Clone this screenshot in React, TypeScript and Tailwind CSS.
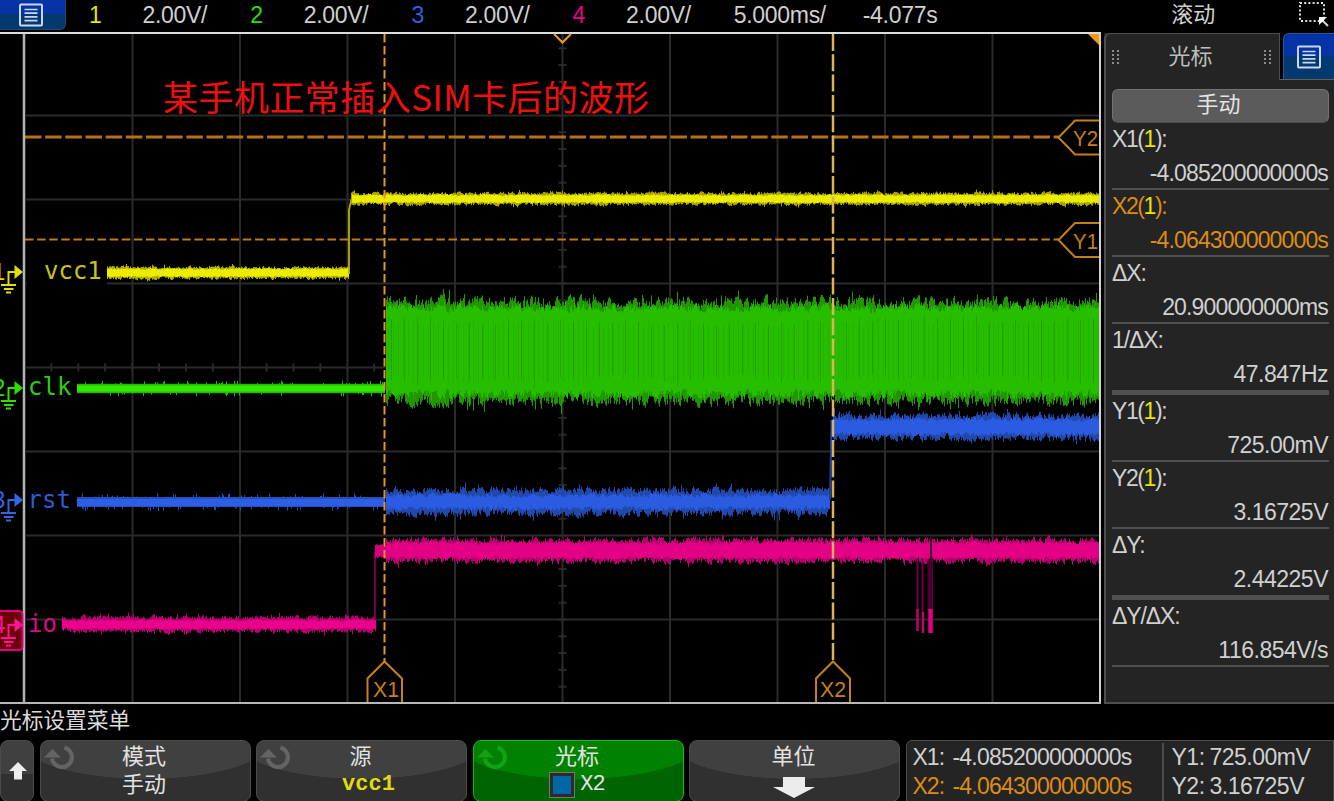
import clsx from "clsx";
import type { ReactNode } from "react";

const SANS = "font-['Liberation_Sans','Noto_Sans_CJK_SC',sans-serif]";

interface Channel {
  id: number;
  scale: string;
  color: string;
}

const channels: Channel[] = [
  { id: 1, scale: "2.00V/", color: "text-[#e6e600]" },
  { id: 2, scale: "2.00V/", color: "text-[#2ee000]" },
  { id: 3, scale: "2.00V/", color: "text-[#2f62e0]" },
  { id: 4, scale: "2.00V/", color: "text-[#e8008c]" },
];

interface Reading {
  label: string;
  source?: number;
  value: string;
  active?: boolean;
  groupEnd?: boolean;
  tight?: boolean;
}

const readings: Reading[] = [
  { label: "X1", source: 1, value: "-4.085200000000s", tight: true },
  { label: "X2", source: 1, value: "-4.064300000000s", active: true, tight: true },
  { label: "ΔX", value: "20.900000000ms", tight: true },
  { label: "1/ΔX", value: "47.847Hz", groupEnd: true },
  { label: "Y1", source: 1, value: "725.00mV" },
  { label: "Y2", source: 1, value: "3.16725V" },
  { label: "ΔY", value: "2.44225V", groupEnd: true },
  { label: "ΔY/ΔX", value: "116.854V/s" },
];

// Deterministic noise so a trace looks the same on every render
function noise(seed: number) {
  let s = seed;
  return () => {
    s = (s * 1664525 + 1013904223) % 4294967296;
    return s / 4294967296;
  };
}

// One vertical stroke per pixel column between a jittered top and bottom,
// each column pulled towards its neighbour so the edge is not pure static
function band(x0: number, x1: number, top: number, bottom: number, jitter: number, seed: number, step = 1) {
  const rnd = noise(seed);
  let d = "";
  let p = 0.5;
  let q = 0.5;
  for (let x = x0; x < x1; x += step) {
    p = p * 0.45 + (rnd() * 1.3 - 0.15) * 0.55;
    q = q * 0.45 + (rnd() * 1.3 - 0.15) * 0.55;
    const a = top + p * jitter - (rnd() > 0.96 ? jitter * 0.4 : 0);
    const b = bottom - q * jitter + (rnd() > 0.96 ? jitter * 0.4 : 0);
    d += `M${x + 0.5} ${a.toFixed(1)}V${b.toFixed(1)}`;
  }
  return d;
}

// Flat trace with an occasional small spike
function spikes(x0: number, x1: number, top: number, bottom: number, size: number, seed: number) {
  const rnd = noise(seed);
  let d = "";
  for (let x = x0; x < x1; x++) {
    const a = top - (rnd() > 0.86 ? rnd() * size : 0);
    const b = bottom + (rnd() > 0.88 ? rnd() * size : 0);
    d += `M${x + 0.5} ${a.toFixed(1)}V${b.toFixed(1)}`;
  }
  return d;
}

function MenuIcon({ className }: { className?: string }) {
  return (
    <svg viewBox="0 0 24 24" className={className} fill="none" stroke="#c9d6f5">
      <rect x="1" y="1.5" width="22" height="21" rx="1" strokeWidth="2" />
      <path d="M5.5 6.5h13M5.5 10.2h13M5.5 13.9h13M5.5 17.6h13" strokeWidth="1.7" />
    </svg>
  );
}

function Grip() {
  return (
    <svg className="h-4 w-2" fill="#8c8c8c">
      {[1, 5, 9, 13].map((y) => (
        <g key={y}>
          <rect x="0" y={y} width="2" height="2" />
          <rect x="5" y={y} width="2" height="2" />
        </g>
      ))}
    </svg>
  );
}

function Knob({ color }: { color: string }) {
  return (
    <svg className="absolute left-[3px] top-1 h-7 w-8" fill="none">
      <path d="M20.5 2.5A10 10 0 1 1 8 13.5" stroke={color} strokeWidth="4.2" />
      <path d="M0 12.5L8.500 4L17 12.500Z" fill={color} />
    </svg>
  );
}

function Ground({ y, n, color }: { y: number; n: number; color: string }) {
  return (
    <g stroke={color} fill={color}>
      <text x="-7.5" y={y + 8} fontSize="23" stroke="none">{n}</text>
      <path d={`M8.5 ${y + 13}V${y}H15`} fill="none" strokeWidth="2" />
      <path d={`M14.5 ${y - 7}L23 ${y}L14.5 ${y + 7}Z`} stroke="none" />
      <path d={`M1 ${y + 13}H16M4 ${y + 17}H13.5M6 ${y + 20.5}H11`} fill="none" strokeWidth="2" />
    </g>
  );
}

function Plot() {
  const cols = Array.from({ length: 9 }, (_, i) => 132.5 + i * 107.5);
  const rows = Array.from({ length: 7 }, (_, i) => 115.5 + i * 84);
  const xTicks = Array.from({ length: 39 }, (_, i) => 24.5 + (i + 1) * 26.9);
  const yTicks = Array.from({ length: 39 }, (_, i) => 31.5 + (i + 1) * 16.8);

  return (
    <svg viewBox="0 31 1102 674" className="block h-[674px] w-[1102px] shrink-0 font-['Liberation_Sans','Noto_Sans_CJK_SC',sans-serif]">
      <g stroke="#2a2a2a" strokeWidth="2">
        {cols.map((x) => <path key={x} d={`M${x} 34V702`} />)}
        {rows.map((y) => <path key={y} d={`M26 ${y}H1099`} />)}
        {xTicks.map((x) => <path key={x} d={`M${x} 363.5V371.5`} />)}
        {yTicks.map((y) => <path key={y} d={`M558.5 ${y}H566.5`} />)}
      </g>

      {/* channel labels sit on the grid with an opaque background */}
      <rect x="27" y="256" width="80" height="29" />
      <g className="font-['DejaVu_Sans_Mono',monospace]" fontSize="24">
        <text x="44" y="279" fill="#c9c31c">vcc1</text>
        <text x="28" y="395" fill="#2bcf10">clk</text>
        <text x="27.5" y="508" fill="#2c5cd4">rst</text>
        <text x="28" y="632" fill="#d80a86">io</text>
      </g>

      {/* vcc1 */}
      <g fill="none">
        <path d={band(107, 349, 265.3, 280.3, 4, 11)} stroke="#b0ac00" />
        <path d={band(107, 349, 268, 277.5, 2, 12)} stroke="#ecec00" />
        <path d="M349 274V210L351.5 199" stroke="#b5ae10" strokeWidth="1.8" />
        <path d={band(351, 1099, 191.2, 206.3, 4, 13)} stroke="#a8a400" />
        <path d={band(352, 1099, 194, 203.5, 2, 14)} stroke="#ecec00" />
      </g>

      {/* clk */}
      <g fill="none">
        <path d={spikes(77, 385, 383.8, 393.2, 3.5, 21)} stroke="#24b800" />
        <path d="M77 388.5H385" stroke="#30ea00" strokeWidth="6" />
        <path d={band(386, 1099, 295, 408, 15, 22)} stroke="#209600" />
        <path d={band(386, 1099, 303, 399, 10, 23)} stroke="#28be00" />
        <path d={band(388, 1099, 318, 384, 10, 24, 5)} stroke="#1fa800" strokeOpacity="0.5" />
        <path d={band(391, 1099, 316, 386, 12, 25, 13)} stroke="#187f00" strokeOpacity="0.4" />
      </g>

      {/* rst */}
      <g fill="none">
        <path d={spikes(77, 385, 497, 507, 4, 31)} stroke="#2450bd" />
        <path d="M77 502.5H385" stroke="#2c5ee8" strokeWidth="7" />
        <path d={band(386, 830, 485.5, 518, 9, 32)} stroke="#2149ab" />
        <path d={band(386, 830, 493, 511, 5, 33)} stroke="#2b5be0" />
        <path d="M830 500L831.5 420" stroke="#1c3f9c" strokeWidth="2" />
        <path d={band(833, 1099, 411, 442.5, 9, 34)} stroke="#2149ab" />
        <path d={band(833, 1099, 417, 436.5, 5, 35)} stroke="#2b5be0" />
      </g>

      {/* io */}
      <g fill="none">
        <path d={band(62, 376, 614.5, 634, 6, 41)} stroke="#b8006e" />
        <path d={band(62, 376, 619, 630, 2.5, 42)} stroke="#ea008c" />
        <path d="M375 620V552" stroke="#6e0043" strokeWidth="2" />
        <path d={band(375, 386, 544, 559, 3, 43)} stroke="#d8007f" />
        <path d={band(386, 1099, 536, 565, 8, 44)} stroke="#b8006e" />
        <path d={band(386, 1099, 541, 560, 4, 45)} stroke="#e20085" />
        <path d="M917.5 558V612M922.5 558V612M932 558V612" stroke="#6e0043" strokeWidth="2" />
        <path d="M930 559V612" stroke="#4a002c" strokeWidth="5" />
        <path d="M917.5 609V631M923 612V633" stroke="#c40075" strokeWidth="2.4" />
        <path d="M930.5 609V633" stroke="#e20085" strokeWidth="4.5" />
        <path d="M931 538V560" stroke="#400028" strokeWidth="2" />
      </g>

      {/* cursors */}
      <g fill="none">
        <path d="M25 137H1059" stroke="#b37412" strokeWidth="3" strokeDasharray="16.5 3.67" />
        <path d="M25 239.5H1059" stroke="#bd7c18" strokeWidth="2" strokeDasharray="8.5 3.6" />
        <path d="M384.5 34V662" stroke="#e59425" strokeWidth="2" strokeDasharray="8.4 3.6" />
        <path d="M833 34V661" stroke="#dcb25c" strokeWidth="2.5" strokeDasharray="17 3.3" />
        <g stroke="#c5801a" strokeWidth="2">
          <path d="M1100 120.5H1075L1058.5 137.5L1075 154.5H1100" />
          <path d="M1100 223H1075L1058.5 240L1075 257H1100" />
          <path d="M367.5 703V678.5L384.5 661.5L402 678.5V703" />
          <path d="M816 703V678.5L833 661.5L850 678.5V703" />
        </g>
      </g>
      <g fill="#c5801a" fontSize="22">
        <text x="1073" y="146" textLength="25" lengthAdjust="spacingAndGlyphs">Y2</text>
        <text x="1073" y="248.5" textLength="25" lengthAdjust="spacingAndGlyphs">Y1</text>
        <text x="373" y="697" textLength="26" lengthAdjust="spacingAndGlyphs">X1</text>
        <text x="820" y="697" textLength="26" lengthAdjust="spacingAndGlyphs">X2</text>
      </g>

      {/* frame */}
      <path d="M24 34V703" stroke="#b4b4b4" strokeWidth="2.5" />
      <path d="M0 33H1101" stroke="#dcdcdc" strokeWidth="2" />
      <path d="M1100 33V704" stroke="#d0d0d0" strokeWidth="2" />
      <path d="M0 703H1101" stroke="#b8b8b8" strokeWidth="2" />
      <path d="M554 34L562.5 42.5L571 34" fill="none" stroke="#f09c1c" strokeWidth="2" />
      <path d="M1088 34H1099V45Z" fill="#f59a10" />

      <Ground y={272} n={1} color="#e0dc10" />
      <Ground y={388} n={2} color="#2ee000" />
      <Ground y={500} n={3} color="#3366e6" />
      <path d="M-2 611H19Q22.5 611 22.5 615V646Q22.5 650 19 650H-2Z" fill="#6d0008" stroke="#e0007f" strokeWidth="2" />
      <Ground y={625} n={4} color="#ff1496" />

      <text x="163" y="111" fontSize="35" fill="#f00f0f" textLength="486" className="font-['Noto_Sans_CJK_SC',sans-serif]">
        某手机正常插入SIM卡后的波形
      </text>
    </svg>
  );
}

function TopBar() {
  return (
    <header className="flex h-[31px] items-start text-[23px] leading-[30px] tracking-[-0.3px] text-[#d0d0d0]">
      <div className="mr-[23px] flex h-[30px] w-[66px] items-center justify-center rounded-br-md border-b border-r border-[#26466e] bg-linear-to-b from-[#0533a5] from-50% to-[#043970] to-50% pr-1">
        <MenuIcon className="h-6 w-6" />
      </div>
      {channels.map((ch) => (
        <div key={ch.id} className="flex w-[161.2px] shrink-0">
          <span className={clsx("w-[53.5px]", ch.color)}>{ch.id}</span>
          <span>{ch.scale}</span>
        </div>
      ))}
      <span className="w-[129px]">5.000ms/</span>
      <span className="w-[308.5px]">-4.077s</span>
      <span className="w-[127px] text-[22px] tracking-normal">滚动</span>
      <svg className="h-7 w-[34px]" fill="none">
        <rect x="2" y="3" width="24" height="18" stroke="#e0e0e0" strokeWidth="2" strokeDasharray="2 2.2" />
        <path d="M30 26L24 20" stroke="#d8d8d8" strokeWidth="2" />
        <path d="M21 17H29L21 25Z" fill="#fff" />
      </svg>
    </header>
  );
}

function SidePanel() {
  return (
    <aside className="ml-0.5 mt-0.5 flex h-[671px] w-[230px] flex-col">
      <div className="flex h-[47px] bg-[#242424]">
        <div className="flex w-[176px] items-center justify-between rounded-tl-md border-l-2 border-r border-t border-[#4e4e4e] pl-1.5 pr-[7px] text-[22px] text-[#bdbdbd]">
          <Grip />
          <span className="mb-0.5 mr-[3px]">光标</span>
          <Grip />
        </div>
        <div className="flex flex-1 border-b border-[#606060] bg-black pl-[3px]">
          <div className="flex flex-1 items-center justify-center rounded-tl-md border-l border-t border-[#2d559e] bg-linear-to-b from-[#0533a5] from-50% to-[#043970] to-50%">
            <MenuIcon className="h-6 w-6" />
          </div>
        </div>
      </div>
      <div className="flex-1 border-b-2 border-l-2 border-[#4e4e4e] bg-[#242424] pl-1.5 pr-[5px] pt-[9px] text-[#d0d0d0]">
        <div className="flex h-[34px] items-center justify-center rounded-md border border-[#747474] border-b-[#4c4c4c] bg-[#5b5b5b] pb-1 pr-1 text-[22px] text-[#e4e4e4]">
          手动
        </div>
        {readings.map((r) => (
          <div
            key={r.label}
            className={clsx(
              "border-[#505050] text-[23px] leading-[33px]",
              r.groupEnd ? "h-[71px] border-b-[5px]" : "h-[67px] border-b-2",
              r.active && "text-[#dc8c14]"
            )}
          >
            <div className={clsx("h-[33px]", r.source ? "tracking-[-1.4px]" : "tracking-[-1.1px]")}>
              {r.label}
              {r.source && <>(<span className="text-[#e6e600]">{r.source}</span>)</>}:
            </div>
            <div className={clsx("h-[33px] whitespace-nowrap pr-px pt-px text-right", r.tight ? "tracking-[-0.85px]" : "tracking-[-0.5px]")}>
              {r.value}
            </div>
          </div>
        ))}
      </div>
    </aside>
  );
}

function SoftKey({ title, active, knob, children }: { title: string; active?: boolean; knob?: boolean; children: ReactNode }) {
  return (
    <div
      className={clsx(
        "relative h-[62px] w-[211px] shrink-0 rounded-lg border pr-0.5 pt-0.5 text-center text-[22px] leading-7 text-[#e2e2e2]",
        active
          ? "border-[#18b818] bg-[radial-gradient(ellipse_125px_38px_at_50%_0,#008200_99%,#006400_100%)]"
          : "border-[#4c4c4c] bg-[radial-gradient(ellipse_125px_38px_at_50%_0,#404040_99%,#303030_100%)]"
      )}
    >
      {knob && <Knob color={active ? "#14a014" : "#646464"} />}
      <div>{title}</div>
      {children}
    </div>
  );
}

function BottomBar() {
  return (
    <footer className="flex h-[61px] gap-[5.5px] overflow-hidden">
      <div className="flex h-[62px] w-[34px] shrink-0 items-center justify-center rounded-lg border border-[#4c4c4c] bg-linear-to-b from-[#404040] from-55% to-[#303030] to-55%">
        <svg className="ml-px h-[18px] w-[18px]" fill="#eee">
          <path d="M9 0L18 9H13V17.5H5V9H0Z" />
        </svg>
      </div>
      <SoftKey title="模式" knob>手动</SoftKey>
      <SoftKey title="源" knob>
        <div className="pl-4 font-['Liberation_Mono',monospace] text-[22px] font-bold text-[#e0dc10]">vcc1</div>
      </SoftKey>
      <SoftKey title="光标" knob active>
        <div className="flex items-center justify-center gap-1.5 pl-px">
          <span className="h-6 w-6 border-[3px] border-[#2b2b2b] bg-[#0067a5] outline outline-[#777]" />
          <span className="font-['Liberation_Mono',monospace] text-[22px] tracking-[-1px]">X2</span>
        </div>
      </SoftKey>
      <SoftKey title="单位">
        <svg className="mx-auto mt-1.5 h-[21px] w-[42px]" fill="#ececec">
          <path d="M10 0H32V10H42L21 21L0 10H10Z" />
        </svg>
      </SoftKey>
      <div className="flex h-[62px] flex-1 whitespace-nowrap rounded-tl-md border border-[#4c4c4c] bg-[#242424] pt-0.5 text-[23px] leading-[28.5px] text-[#d0d0d0]">
        <div className="w-[257px] border-r-2 border-[#4c4c4c] pl-1.5">
          <div className="flex"><span className="w-10 tracking-[-1px]">X1:</span><span className="tracking-[-0.8px]">-4.085200000000s</span></div>
          <div className="flex text-[#dc8c14]"><span className="w-10 tracking-[-1px]">X2:</span><span className="tracking-[-0.8px]">-4.064300000000s</span></div>
        </div>
        <div className="pl-2 tracking-[-0.5px]">
          <div className="flex"><span className="w-[38px]">Y1:</span>725.00mV</div>
          <div className="flex"><span className="w-[38px]">Y2:</span>3.16725V</div>
        </div>
      </div>
    </footer>
  );
}

export default function App() {
  return (
    <div className={clsx("flex h-[801px] w-[1334px] flex-col overflow-hidden bg-black", SANS)}>
      <TopBar />
      <main className="flex h-[674px]">
        <Plot />
        <SidePanel />
      </main>
      <div className="h-[35px] text-[21.7px] leading-8 text-[#dadada]">光标设置菜单</div>
      <BottomBar />
    </div>
  );
}
